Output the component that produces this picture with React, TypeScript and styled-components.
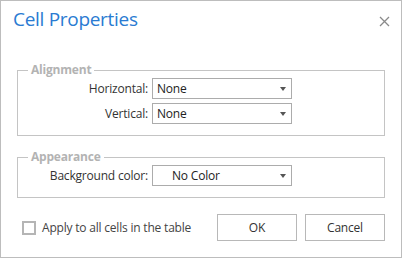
import styled, { createGlobalStyle } from "styled-components";

const GlobalStyle = createGlobalStyle`
    html, body {
        margin: 0;
        padding: 0;
        background: #ffffff;
    }
    * {
        box-sizing: border-box;
    }
`;

const Dialog = styled.div`
    width: 402px;
    height: 258px;
    border: 1px solid #bdbdbd;
    background: #ffffff;
    font-family: "Segoe UI", "Open Sans", "Noto Sans", sans-serif;
    font-size: 12px;
    letter-spacing: -0.2px;
    color: #333333;
    display: flex;
    flex-direction: column;

    & > * {
        flex-shrink: 0;
    }
`;

const Header = styled.div`
    display: flex;
    align-items: flex-start;
    justify-content: space-between;
    padding: 4px 11px 0 12px;
    height: 61px;
`;

const Title = styled.h1`
    margin: 0;
    font-size: 19px;
    font-weight: 400;
    letter-spacing: -0.3px;
    line-height: 28px;
    color: #2a7bd2;
`;

const CloseButton = styled.button`
    border: none;
    background: none;
    padding: 0;
    margin-top: 11px;
    width: 11px;
    height: 11px;
    display: flex;
    cursor: pointer;
`;

const Group = styled.fieldset<{ $gap?: number }>`
    margin: ${(p) => p.$gap ?? 0}px 16px 0 16px;
    border: 1px solid #c4c4c4;
    padding: 0 0 11px 0;
    min-width: 0;
`;

const Legend = styled.legend`
    margin-left: 10px;
    padding: 0 3px;
    font-size: 12px;
    font-weight: 700;
    line-height: 16px;
    color: #b3b3b3;
`;

const Rows = styled.div`
    display: flex;
    flex-direction: column;
    gap: 4px;
`;

const Row = styled.div`
    display: flex;
    align-items: center;
`;

const Label = styled.label`
    width: 130px;
    text-align: right;
    color: #333333;
    white-space: nowrap;
`;

const Select = styled.div<{ $indent?: number }>`
    position: relative;
    margin-left: 4px;
    width: 140px;
    height: 21px;
    border: 1px solid #acacac;
    padding-left: ${(p) => p.$indent ?? 4}px;
    display: flex;
    align-items: center;
    color: #222222;

    &::after {
        content: "";
        position: absolute;
        right: 5px;
        top: 8px;
        border-left: 3.5px solid transparent;
        border-right: 3.5px solid transparent;
        border-top: 4px solid #555555;
    }
`;

const Footer = styled.div`
    display: flex;
    align-items: center;
    margin-top: 16px;
    padding: 0 16px 0 21px;
`;

const Check = styled.label`
    display: flex;
    align-items: center;
    gap: 6px;
    flex: 1;
    color: #444444;
`;

const Box = styled.span`
    width: 14px;
    height: 14px;
    border: 2px solid #b5b5b5;
    background: #ffffff;
`;

const Buttons = styled.div`
    display: flex;
    gap: 8px;
`;

const Button = styled.button`
    width: 80px;
    height: 27px;
    border: 1px solid #b8b8b8;
    background: #ffffff;
    font-family: inherit;
    font-size: 12px;
    letter-spacing: -0.2px;
    color: #333333;
    padding: 0;
`;

const fields = [
    {
        legend: "Alignment",
        gap: 0,
        rows: [
            { label: "Horizontal:", value: "None", indent: 4 },
            { label: "Vertical:", value: "None", indent: 4 },
        ],
    },
    {
        legend: "Appearance",
        gap: 13,
        rows: [{ label: "Background color:", value: "No Color", indent: 19 }],
    },
];

const App = () => {
    return (
        <>
            <GlobalStyle />
            <Dialog>
                <Header>
                    <Title>Cell Properties</Title>
                    <CloseButton aria-label="Close">
                        <svg width="11" height="11" viewBox="0 0 11 11">
                            <path d="M1 1 L10 10 M10 1 L1 10" stroke="#8a8a8a" strokeWidth="1.3" />
                        </svg>
                    </CloseButton>
                </Header>
                {fields.map((f) => (
                    <Group key={f.legend} $gap={f.gap}>
                        <Legend>{f.legend}</Legend>
                        <Rows>
                            {f.rows.map((r) => (
                                <Row key={r.label}>
                                    <Label>{r.label}</Label>
                                    <Select $indent={r.indent}>{r.value}</Select>
                                </Row>
                            ))}
                        </Rows>
                    </Group>
                ))}
                <Footer>
                    <Check>
                        <Box />
                        Apply to all cells in the table
                    </Check>
                    <Buttons>
                        <Button>OK</Button>
                        <Button>Cancel</Button>
                    </Buttons>
                </Footer>
            </Dialog>
        </>
    );
};

export default App;
